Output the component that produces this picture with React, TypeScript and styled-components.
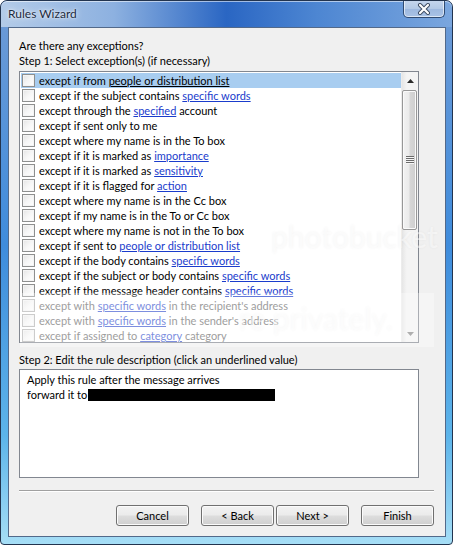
import React from "react";
import styled, { createGlobalStyle } from "styled-components";

const GlobalStyle = createGlobalStyle`
  html, body { margin: 0; padding: 0; background: #ffffff; }
  body { font-family: "Lato", "Open Sans", sans-serif; }
  * { box-sizing: border-box; }
`;

const UI_FONT = `"Lato", "Open Sans", sans-serif`;

const Window = styled.div`
  position: relative;
  width: 453px;
  height: 545px;
  border: 1px solid #22344f;
  border-radius: 7px 7px 4px 4px;
  background: linear-gradient(to bottom, #6f9bd6 0%, #3f8cdc 45%, #5cb4ea 80%, #a6def6 100%);
  display: flex;
  flex-direction: column;
  overflow: hidden;
`;

const TitleBar = styled.div`
  height: 26px;
  display: flex;
  align-items: flex-start;
  justify-content: space-between;
  background: linear-gradient(to right, #b3cbe8 0%, #8db1e0 25%, #2a66c3 50%, #4d86d2 70%, #7aa6de 100%);
  box-shadow: inset 0 1px 0 rgba(255, 255, 255, 0.55);
  border-radius: 6px 6px 0 0;
`;

const Title = styled.div`
  font-family: ${UI_FONT};
  font-size: 12px;
  color: #1c2b3f;
  padding: 5px 0 0 7px;
  text-shadow: 0 0 6px rgba(255, 255, 255, 0.9), 0 0 2px rgba(255, 255, 255, 0.9);
`;

const CloseButton = styled.div`
  width: 42px;
  height: 18px;
  margin: -1px 7px 0 0;
  border: 1px solid #304b72;
  border-top: none;
  border-radius: 0 0 5px 5px;
  background: linear-gradient(to bottom, #c6d7ee 0%, #b3c9e6 50%, #9db8df 51%, #a9c3e6 100%);
  box-shadow: inset 0 0 0 1px rgba(255, 255, 255, 0.6);
  display: flex;
  align-items: center;
  justify-content: center;
`;

const Client = styled.div`
  margin: 0 6px 7px 7px;
  flex: 1;
  background: #f0f0f0;
  border: 1px solid #52698a;
  padding: 10px 11px 0 10px;
  display: flex;
  flex-direction: column;
  position: relative;
`;

const Label = styled.div<{ $gap?: number }>`
  font-family: ${UI_FONT};
  font-size: 11px;
  line-height: 15px;
  height: 15px;
  color: #000;
  white-space: nowrap;
  margin-top: ${(p) => p.$gap ?? 0}px;
`;

const ListBox = styled.div`
  margin-top: 3px;
  width: 400px;
  height: 272px;
  border: 1px solid #828790;
  background: #ffffff;
  display: flex;
  overflow: hidden;
`;

const Rows = styled.div`
  flex: 1;
  padding: 1px 0 0 1px;
  display: flex;
  flex-direction: column;
  overflow: hidden;
`;

const Row = styled.div<{ $selected?: boolean; $faded?: boolean }>`
  height: 15px;
  flex: 0 0 15px;
  display: flex;
  align-items: center;
  padding-left: 1px;
  background: ${(p) => (p.$selected ? "#a8cdf0" : "transparent")};
  font-family: ${UI_FONT};
  font-size: 11px;
  color: ${(p) => (p.$faded ? "#6f6f6f" : "#000")};
  white-space: nowrap;
`;

const Check = styled.span<{ $faded?: boolean }>`
  width: 13px;
  height: 13px;
  flex: 0 0 13px;
  border: 1px solid ${(p) => (p.$faded ? "#b4b4b4" : "#8e8f8f")};
  background: linear-gradient(135deg, #e4e4e4 0%, #f6f6f6 50%, #ffffff 100%);
  box-shadow: inset 0 0 0 1px #f4f4f4;
  margin-right: 4px;
`;

const Link = styled.span<{ $selected?: boolean; $faded?: boolean }>`
  color: ${(p) => (p.$selected ? "#000" : p.$faded ? "#4059d0" : "#1a3ccc")};
  text-decoration: underline;
`;

const ScrollBar = styled.div`
  width: 17px;
  flex: 0 0 17px;
  background: linear-gradient(to right, #e6e6e6 0%, #f4f4f4 30%, #f4f4f4 100%);
  border-left: 1px solid #ececec;
  display: flex;
  flex-direction: column;
`;

const ArrowButton = styled.div`
  height: 17px;
  flex: 0 0 17px;
  display: flex;
  align-items: center;
  justify-content: center;
`;

const Track = styled.div`
  flex: 1;
  display: flex;
  flex-direction: column;
  padding: 1px 0 0 0;
`;

const Thumb = styled.div`
  height: 140px;
  margin: 0 1px 0 0;
  border: 1px solid #979797;
  border-radius: 2px;
  background: linear-gradient(to right, #f2f2f2 0%, #ebebeb 45%, #d6d6d6 55%, #cfcfcf 100%);
  box-shadow: inset 0 0 0 1px #fafafa;
  display: flex;
  align-items: center;
  justify-content: center;
`;

const DescBox = styled.div`
  margin-top: 2px;
  width: 400px;
  height: 109px;
  border: 1px solid #828790;
  background: #ffffff;
  padding: 2px 0 0 7px;
  font-family: ${UI_FONT};
  font-size: 11px;
  line-height: 15px;
  color: #000;
`;

const DescLine = styled.div`
  height: 15px;
  display: flex;
  align-items: center;
  white-space: nowrap;
`;

const Redacted = styled.span`
  display: inline-block;
  width: 187px;
  height: 12px;
  background: #000;
  margin-left: 1px;
`;

const Separator = styled.div`
  margin-top: 12px;
  height: 2px;
  border-top: 1px solid #a0a0a0;
  border-bottom: 1px solid #ffffff;
`;

const ButtonRow = styled.div`
  margin-top: 13px;
  display: flex;
  justify-content: flex-end;
`;

const Button = styled.div<{ $gap?: number }>`
  width: 73px;
  height: 21px;
  margin-left: ${(p) => p.$gap ?? 0}px;
  border: 1px solid #707070;
  border-radius: 3px;
  background: linear-gradient(to bottom, #f2f2f2 0%, #ebebeb 48%, #dddddd 52%, #cfcfcf 100%);
  box-shadow: inset 0 0 0 1px #fbfbfb;
  font-family: ${UI_FONT};
  font-size: 11px;
  color: #000;
  display: flex;
  align-items: center;
  justify-content: center;
`;

const WatermarkBand = styled.div`
  position: absolute;
  left: 11px;
  top: 265px;
  width: 414px;
  height: 54px;
  background: rgba(255, 255, 255, 0.32);
  pointer-events: none;
`;

const WatermarkText = styled.div<{ $top: number; $left: number; $size: number }>`
  position: absolute;
  top: ${(p) => p.$top}px;
  left: ${(p) => p.$left}px;
  font-family: "Lato", "Open Sans", sans-serif;
  font-size: ${(p) => p.$size}px;
  color: rgba(255, 255, 255, 0.5);
  text-shadow: 0 0 3px rgba(0, 0, 0, 0.05);
  pointer-events: none;
  white-space: nowrap;
`;

const items: string[] = [
  "except if from {people or distribution list}",
  "except if the subject contains {specific words}",
  "except through the {specified} account",
  "except if sent only to me",
  "except where my name is in the To box",
  "except if it is marked as {importance}",
  "except if it is marked as {sensitivity}",
  "except if it is flagged for {action}",
  "except where my name is in the Cc box",
  "except if my name is in the To or Cc box",
  "except where my name is not in the To box",
  "except if sent to {people or distribution list}",
  "except if the body contains {specific words}",
  "except if the subject or body contains {specific words}",
  "except if the message header contains {specific words}",
  "except with {specific words} in the recipient's address",
  "except with {specific words} in the sender's address",
  "except if assigned to {category} category",
];

function renderText(text: string, selected: boolean, faded: boolean) {
  const parts = text.split(/(\{[^}]+\})/g).filter((s) => s.length > 0);
  return parts.map((p, i) =>
    p.startsWith("{") ? (
      <Link key={i} $selected={selected} $faded={faded}>
        {p.slice(1, -1)}
      </Link>
    ) : (
      <span key={i}>{p.replace(/ /g, "\u00a0")}</span>
    )
  );
}

const CloseIcon = () => (
  <svg width="14" height="12" viewBox="0 0 14 12">
    <path d="M3 2 L11 10 M11 2 L3 10" stroke="#3b4a60" strokeWidth="4" strokeLinecap="round" />
    <path d="M3 2 L11 10 M11 2 L3 10" stroke="#ffffff" strokeWidth="2.2" strokeLinecap="round" />
  </svg>
);

const UpArrow = () => (
  <svg width="7" height="4" viewBox="0 0 7 4">
    <path d="M0 4 L3.5 0 L7 4 Z" fill="#2b2b2b" />
  </svg>
);

const DownArrow = () => (
  <svg width="7" height="4" viewBox="0 0 7 4">
    <path d="M0 0 L3.5 4 L7 0 Z" fill="#8a8a8a" />
  </svg>
);

const Grip = () => (
  <svg width="8" height="8" viewBox="0 0 8 8">
    {[0, 2, 4, 6].map((y) => (
      <g key={y}>
        <rect x="0" y={y} width="8" height="1" fill="#6b6b6b" />
        <rect x="0" y={y + 1} width="8" height="1" fill="#f6f6f6" />
      </g>
    ))}
  </svg>
);

export default function App() {
  return (
    <>
      <GlobalStyle />
      <Window>
        <TitleBar>
          <Title>Rules Wizard</Title>
          <CloseButton>
            <CloseIcon />
          </CloseButton>
        </TitleBar>
        <Client>
          <Label>Are there any exceptions?</Label>
          <Label>Step 1: Select exception(s) (if necessary)</Label>
          <ListBox>
            <Rows>
              {items.map((t, i) => {
                const selected = i === 0;
                const faded = i >= 15;
                return (
                  <Row key={i} $selected={selected} $faded={faded}>
                    <Check $faded={faded} />
                    {renderText(t, selected, faded)}
                  </Row>
                );
              })}
            </Rows>
            <ScrollBar>
              <ArrowButton>
                <UpArrow />
              </ArrowButton>
              <Track>
                <Thumb>
                  <Grip />
                </Thumb>
              </Track>
              <ArrowButton>
                <DownArrow />
              </ArrowButton>
            </ScrollBar>
          </ListBox>
          <Label $gap={9}>Step 2: Edit the rule description (click an underlined value)</Label>
          <DescBox>
            <DescLine>Apply this rule after the message arrives</DescLine>
            <DescLine>
              forward it to<Redacted />
            </DescLine>
          </DescBox>
          <Separator />
          <ButtonRow>
            <Button>Cancel</Button>
            <Button $gap={12}>&lt; Back</Button>
            <Button $gap={2}>Next &gt;</Button>
            <Button $gap={12}>Finish</Button>
          </ButtonRow>
          <WatermarkText $top={190} $left={262} $size={30}>
            photobucket
          </WatermarkText>
          <WatermarkText $top={272} $left={230} $size={30}>
            re privately.
          </WatermarkText>
          <WatermarkBand />
        </Client>
      </Window>
    </>
  );
}
